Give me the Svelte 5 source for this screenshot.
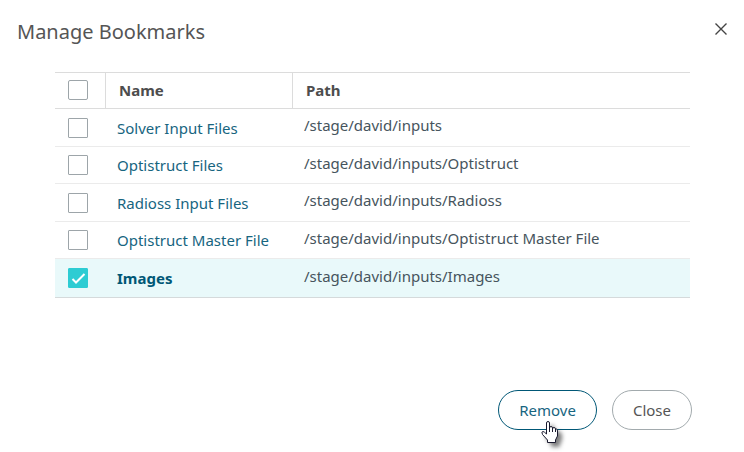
<script>
  let bookmarks = $state([
    { name: 'Solver Input Files', path: '/stage/david/inputs', selected: false },
    { name: 'Optistruct Files', path: '/stage/david/inputs/Optistruct', selected: false },
    { name: 'Radioss Input Files', path: '/stage/david/inputs/Radioss', selected: false },
    { name: 'Optistruct Master File', path: '/stage/david/inputs/Optistruct Master File', selected: false },
    { name: 'Images', path: '/stage/david/inputs/Images', selected: true },
  ]);
  let isOpen = $state(true);

  const allSelected = $derived(bookmarks.length > 0 && bookmarks.every(({ selected }) => selected));

  const toggleAll = ({ currentTarget }) => {
    bookmarks.forEach((bookmark) => {
      bookmark.selected = currentTarget.checked;
    });
  };
  const remove = () => {
    bookmarks = bookmarks.filter(({ selected }) => !selected);
  };
  const close = () => {
    isOpen = false;
  };
</script>

{#if isOpen}
  <div class="dialog" role="dialog" aria-labelledby="title">
    <header>
      <h1 id="title">Manage Bookmarks</h1>
      <button class="dismiss" aria-label="Close dialog" onclick={close}>
        <svg viewBox="0 0 12 12" width="12" height="12">
          <path d="M0.5 0.5L11.5 11.5M11.5 0.5L0.5 11.5" />
        </svg>
      </button>
    </header>

    <div class="content">
      <table>
        <thead>
          <tr>
            <th class="check">
              <input type="checkbox" aria-label="Select all" checked={allSelected} onchange={toggleAll} />
            </th>
            <th class="name">Name</th>
            <th>Path</th>
          </tr>
        </thead>
        <tbody>
          {#each bookmarks as bookmark}
            <tr class:selected={bookmark.selected}>
              <td class="check">
                <input type="checkbox" aria-label={bookmark.name} bind:checked={bookmark.selected} />
                {#if bookmark.selected}
                  <svg class="tick" viewBox="0 0 20 20" width="20" height="20">
                    <path d="M4.5 11L8 14.5L16.5 6" />
                  </svg>
                {/if}
              </td>
              <td><a href="#bookmark">{bookmark.name}</a></td>
              <td class="path">{bookmark.path}</td>
            </tr>
          {/each}
        </tbody>
      </table>
    </div>

    <footer>
      <div class="action">
        <button class="primary" onclick={remove}>Remove</button>
        <svg class="pointer" viewBox="0 0 26 30" width="26" height="30">
          <path
            d="M6.5 14V3Q6.5 1.5 8 1.5Q9.5 1.5 9.5 3V8Q9.5 6.5 11 6.5Q12.5 6.5 12.5 8V9Q12.5 7.5 14 7.5Q15.5 7.5 15.5 9V10Q15.5 9 16.5 9Q17.5 9 17.5 11V16L15.5 20V22.5H7.5V20L2.5 14.5Q1 11.5 3 11.5Q4 11.5 6.5 14Z"
          />
          <path class="fingers" d="M9.5 7V12M12.5 8V12M15.5 9V12" />
        </svg>
      </div>
      <button onclick={close}>Close</button>
    </footer>
  </div>
{/if}

<style>
  :global(body) {
    margin: 0;
    background: #fff;
  }

  .dialog {
    font: 15px/20px "Noto Sans", sans-serif;
    color: #555;
  }

  header {
    display: flex;
    justify-content: space-between;
    align-items: flex-start;
    padding: 18px 17px 0;
  }

  h1 {
    margin: 0;
    font-size: 20px;
    line-height: 28px;
    font-weight: 400;
  }

  .dismiss {
    height: 22px;
    padding: 0;
    border: 0;
    background: none;
    cursor: pointer;
  }

  .dismiss svg {
    display: block;
    stroke: #444;
    stroke-width: 1.4;
  }

  .content {
    min-height: 318px;
    box-sizing: border-box;
    padding: 26px 54px 0 55px;
  }

  table {
    width: 100%;
    table-layout: fixed;
    border-collapse: separate;
    border-spacing: 0;
    border-top: 1px solid #dcdcdc;
    border-bottom: 1px solid #d5dadb;
  }

  th {
    height: 33px;
    padding: 0 13px 2px;
    border-bottom: 1px solid #dcdcdc;
    text-align: left;
    font-weight: 700;
    color: #4d4d4d;
  }

  th + th {
    border-left: 1px solid #dcdcdc;
  }

  th.check {
    width: 24px;
  }

  th.name {
    width: 160px;
  }

  td {
    box-sizing: border-box;
    height: 38px;
    padding: 0 12px;
    border-bottom: 1px solid #ebebeb;
  }

  tr:nth-child(even) td {
    height: 37px;
  }

  tr:last-child td {
    border-bottom: 0;
  }

  .check {
    position: relative;
    padding-left: 13px;
  }

  td.path {
    padding-bottom: 5px;
    color: #46545d;
  }

  .selected td {
    background: #e9f9fa;
  }

  input {
    display: block;
    appearance: none;
    box-sizing: border-box;
    width: 20px;
    height: 20px;
    margin: 0;
    border: 1px solid #9da5a9;
    border-radius: 1px;
    background: #fff;
  }

  th input {
    border-radius: 2px;
  }

  input:checked {
    border-color: #2dccd3;
    background: #2dccd3;
  }

  .tick {
    position: absolute;
    top: 50%;
    left: 13px;
    margin-top: -10px;
    fill: none;
    stroke: #fff;
    stroke-width: 2;
    pointer-events: none;
  }

  a {
    color: #17657f;
    text-decoration: none;
  }

  .selected a {
    font-weight: 700;
    color: #005776;
  }

  footer {
    display: flex;
    justify-content: flex-end;
    gap: 15px;
    padding: 26px 52px 22px;
  }

  footer button {
    height: 40px;
    padding: 0 20px;
    border: 1px solid #a2aaad;
    border-radius: 20px;
    background: #fff;
    font: inherit;
    color: #555;
    cursor: pointer;
  }

  .action {
    position: relative;
  }

  footer .primary {
    border-color: #005776;
    color: #17657f;
  }

  .pointer {
    position: absolute;
    top: 30px;
    left: 42px;
    fill: #fff;
    stroke: #1a1a2e;
    filter: drop-shadow(4px 4px 2px rgba(0, 0, 0, 0.5));
    pointer-events: none;
  }

  .fingers {
    fill: none;
  }
</style>
